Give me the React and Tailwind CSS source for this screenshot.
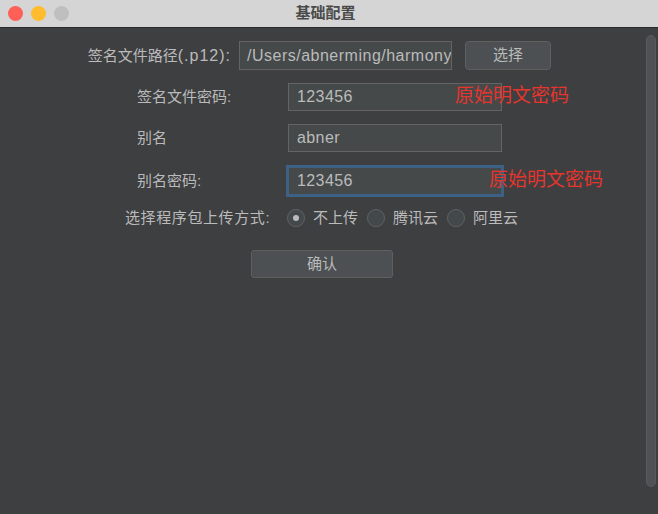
import React, { useState } from 'react';

// 基础配置窗口 | basic config dialog (darcula look)
const font = { fontFamily: '"Liberation Sans", "Noto Sans CJK SC", sans-serif' };

const Field = ({ value, width = 'w-[214px]', focused = false }) => (
  <div
    className={`h-[28px] ${width} flex items-center px-[8px] overflow-hidden whitespace-nowrap bg-[#45494a] text-[16px] tracking-[0.4px] text-[#bbbbbb] border ${
      focused ? 'border-[#3d6185] ring-2 ring-[#3d6185]' : 'border-[#646464]'
    }`}
  >
    {value}
  </div>
);

const Radio = ({ checked, label, onClick }) => (
  <button onClick={onClick} className="flex items-center gap-[8px] text-[15px] text-[#bbbbbb]">
    <span className="w-[18px] h-[18px] rounded-full border border-[#5f6263] bg-[#43484a] flex items-center justify-center">
      {checked && <span className="w-[6px] h-[6px] rounded-full bg-[#bbbbbb]" />}
    </span>
    <span>{label}</span>
  </button>
);

export default function App() {
  const [upload, setUpload] = useState('none');

  return (
    <div className="w-[658px] h-[514px] flex flex-col bg-[#3e3f41] overflow-hidden relative" style={font}>
      {/* 标题栏 | title bar */}
      <div className="h-[28px] shrink-0 flex items-center bg-[#d5d5d5] border-b border-[#2a2a2a] relative">
        <div className="flex items-center gap-[8px] pl-[8px]">
          <span className="w-[15px] h-[15px] rounded-full bg-[#fe5f57]" />
          <span className="w-[15px] h-[15px] rounded-full bg-[#febc2e]" />
          <span className="w-[15px] h-[15px] rounded-full bg-[#bfbfbf]" />
        </div>
        <div className="flex-1 text-center text-[15px] font-bold text-[#4a4a4a] pr-[76px]">基础配置</div>
      </div>

      <div className="flex flex-col pt-[13px]">
        {/* 签名文件路径 */}
        <div className="flex items-center h-[29px]">
          <div className="w-[231px] text-right text-[15px] text-[#bbbbbb] whitespace-nowrap">
            签名文件路径<span className="text-[16px] tracking-[1px]">(.p12):</span>
          </div>
          <div className="ml-[8px] h-[29px] w-[213px] flex items-center px-[7px] overflow-hidden whitespace-nowrap bg-[#45494a] border border-[#646464] text-[16px] tracking-[0.5px] text-[#bbbbbb]">
            /Users/abnerming/harmony
          </div>
          <button className="ml-[13px] h-[29px] w-[86px] rounded-[4px] bg-[#4c5052] border border-[#5e6060] text-[15px] text-[#bbbbbb]">
            选择
          </button>
        </div>

        {/* 签名文件密码 */}
        <div className="flex items-center h-[28px] mt-[13px] relative">
          <div className="w-[288px] pl-[137px] shrink-0 whitespace-nowrap text-[15px] text-[#bbbbbb]">签名文件密码:</div>
          <Field value="123456" />
          <span className="absolute left-[455px] top-[-1px] text-[19px] text-[#e5352d] whitespace-nowrap">原始明文密码</span>
        </div>

        {/* 别名 */}
        <div className="flex items-center h-[28px] mt-[13px]">
          <div className="w-[288px] pl-[137px] text-[15px] text-[#bbbbbb]">别名</div>
          <Field value="abner" />
        </div>

        {/* 别名密码 */}
        <div className="flex items-center h-[28px] mt-[15px] relative">
          <div className="w-[288px] pl-[137px] text-[15px] text-[#bbbbbb]">别名密码:</div>
          <Field value="123456" focused />
          <span className="absolute left-[489px] top-[-1px] text-[19px] text-[#e5352d] whitespace-nowrap">原始明文密码</span>
        </div>

        {/* 上传方式 */}
        <div className="flex items-center h-[20px] mt-[13px]">
          <div className="w-[287px] pl-[125px] text-[15px] tracking-[0.6px] text-[#bbbbbb] whitespace-nowrap">选择程序包上传方式:</div>
          <div className="flex items-center gap-[9px]">
            <Radio checked={upload === 'none'} label="不上传" onClick={() => setUpload('none')} />
            <Radio checked={upload === 'tencent'} label="腾讯云" onClick={() => setUpload('tencent')} />
            <Radio checked={upload === 'aliyun'} label="阿里云" onClick={() => setUpload('aliyun')} />
          </div>
        </div>

        {/* 确认 */}
        <div className="pl-[251px] mt-[22px]">
          <button className="h-[28px] w-[142px] rounded-[3px] bg-[#4c5052] border border-[#5e6060] text-[15px] text-[#bbbbbb]">
            确认
          </button>
        </div>
      </div>

      {/* 滚动条 | scrollbar */}
      <div className="absolute right-[2px] top-[35px] w-[10px] h-[452px] rounded-full bg-[#4f5254] border border-[#585b5d]" />
    </div>
  );
}
